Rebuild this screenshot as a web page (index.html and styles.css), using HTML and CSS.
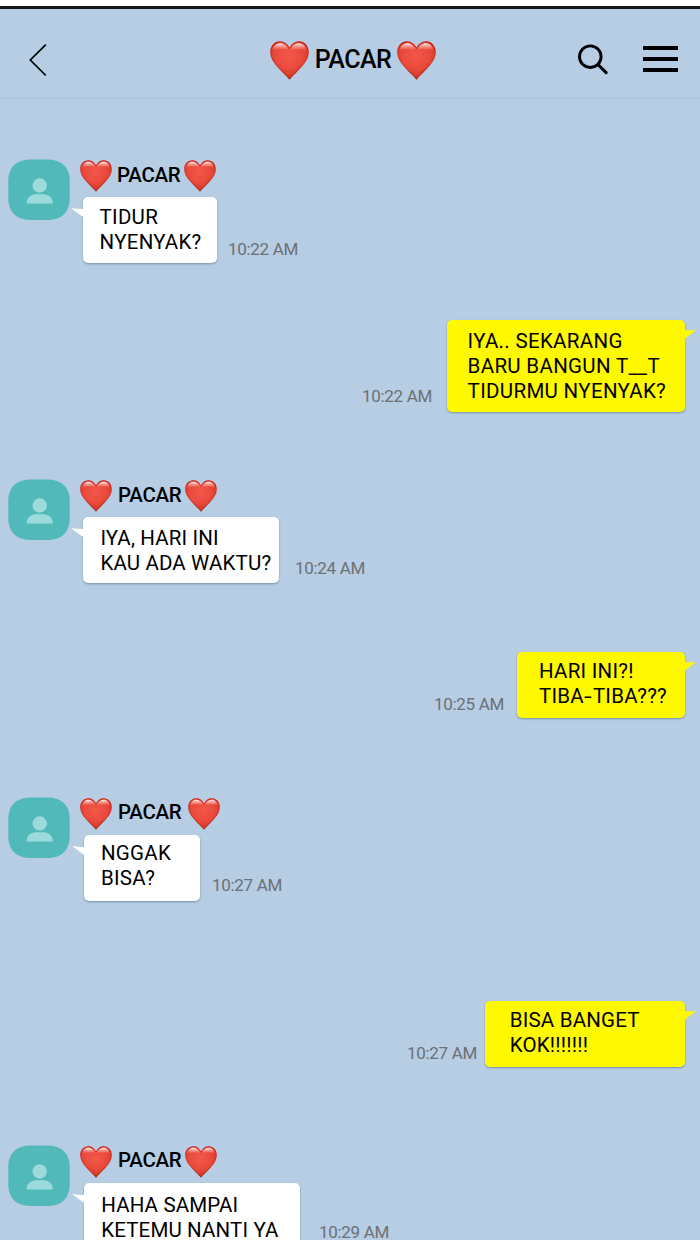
FILE: index.html
```html
<!DOCTYPE html>
<html lang="id">
<head>
<meta charset="utf-8">
<title>Pacar</title>
<link rel="stylesheet" href="styles.css">
</head>
<body>
<svg class="defs" width="0" height="0" aria-hidden="true">
  <defs>
    <linearGradient id="heart-edge" x1="0" y1="0" x2="0" y2="1">
      <stop offset="0" stop-color="#c9120b"/><stop offset=".55" stop-color="#d23a2b"/><stop offset="1" stop-color="#a52a14"/>
    </linearGradient>
    <radialGradient id="heart-fill" cx=".48" cy=".38" r=".62">
      <stop offset="0" stop-color="#f2584b"/><stop offset=".6" stop-color="#ea4a3c"/><stop offset="1" stop-color="#d23424"/>
    </radialGradient>
    <linearGradient id="heart-shine" x1="0" y1="0" x2="0" y2="1">
      <stop offset="0" stop-color="#fff" stop-opacity=".95"/><stop offset="1" stop-color="#ff8a7c" stop-opacity="0"/>
    </linearGradient>
    <symbol id="heart" viewBox="0 0 32 32">
      <path fill="url(#heart-edge)" d="M16 5.400C14.200 2.200 11.500.300 8.300.300 3.700.300.200 4.100.200 9.200c0 8.300 8.600 14.400 15.800 22.500 7.200-8.100 15.800-14.200 15.800-22.500 0-5.100-3.500-8.900-8.100-8.900-3.200 0-5.900 1.900-7.700 5.100z"/>
      <path fill="url(#heart-fill)" d="M16 6.700C14.300 3.200 11.600 1.100 8.500 1.100 4.200 1.100 1 4.600 1 9.300c0 7.600 8.100 13.400 15 21.200 6.900-7.800 15-13.600 15-21.200 0-4.700-3.200-8.200-7.500-8.200-3.100 0-5.800 2.100-7.500 5.600z"/>
      <path fill="url(#heart-shine)" d="M2 8.400C2.500 4 5.200 1.800 8.300 1.800c3 0 5.500 1.900 6.700 5.400C12.800 6.600 10.700 6.500 8.200 6.500 5.800 6.500 3.700 7 2 8.400zM17 7.200c1.200-3.500 3.700-5.400 6.700-5.400 3.100 0 5.800 2.200 6.300 6.600-1.700-1.400-3.800-1.900-6.200-1.900-2.500 0-4.600.100-6.800.700z"/>
    </symbol>
    <symbol id="avatar" viewBox="0 0 62 61">
      <path fill="#51b9b9" d="M23 .500h16c15 0 22.700 8 22.700 21v18c0 13-7.700 21.500-22.700 21.500H23C8 61 .300 52.500.300 39.500v-18C.300 8.500 8 .500 23 .500z"/>
      <circle cx="31.700" cy="26.500" r="7.200" fill="#9ddadb"/>
      <path fill="#9ddadb" d="M18.600 44.500c0-5.700 4-9.200 9-9.200h8.200c5 0 9 3.500 9 9.200z"/>
    </symbol>
    <symbol id="tail-left" viewBox="0 0 14 11">
      <path d="M0 0Q6 1.200 14 1V10L10 7.500z" fill="#fff"/>
    </symbol>
    <symbol id="tail-right" viewBox="0 0 12 10">
      <path d="M0 1Q6 1.400 12 .900L1 9.500H0z" fill="#fff900"/>
    </symbol>
  </defs>
</svg>
<div class="screen">
  <header class="header">
    <svg class="back" viewBox="0 0 20 34"><path d="M17.800 1.600 2.300 17l15.500 15.500" fill="none" stroke="#000" stroke-width="1.700"/></svg>
    <h1 class="title"><svg class="title-heart"><use href="#heart"/></svg><span class="title-text">PACAR</span><svg class="title-heart"><use href="#heart"/></svg></h1>
    <div class="actions">
      <svg class="search" viewBox="0 0 32 32"><circle cx="12.300" cy="12.700" r="10.800" fill="none" stroke="#000" stroke-width="2.900"/><path d="M19.900 20.500l8.200 8.200" stroke="#000" stroke-width="3.100" stroke-linecap="round"/></svg>
      <div class="menu"><i></i><i></i><i></i></div>
    </div>
  </header>
  <main class="chat">
    <article class="msg in first">
      <svg class="avatar"><use href="#avatar"/></svg>
      <div class="body">
        <div class="name"><svg class="heart"><use href="#heart"/></svg><span class="who">PACAR</span><svg class="heart"><use href="#heart"/></svg></div>
        <div class="line"><p class="bubble"><svg class="tail"><use href="#tail-left"/></svg>TIDUR<br>NYENYAK?</p><time class="time">10:22 AM</time></div>
      </div>
    </article>
    <article class="msg out awake">
      <time class="time">10:22 AM</time>
      <p class="bubble"><svg class="tail"><use href="#tail-right"/></svg>IYA.. SEKARANG<br>BARU BANGUN T<span class="score">__</span>T<br>TIDURMU NYENYAK?</p>
    </article>
    <article class="msg in free">
      <svg class="avatar"><use href="#avatar"/></svg>
      <div class="body">
        <div class="name"><svg class="heart"><use href="#heart"/></svg><span class="who">PACAR</span><svg class="heart"><use href="#heart"/></svg></div>
        <div class="line"><p class="bubble"><svg class="tail"><use href="#tail-left"/></svg>IYA, HARI INI<br>KAU ADA WAKTU?</p><time class="time">10:24 AM</time></div>
      </div>
    </article>
    <article class="msg out today">
      <time class="time">10:25 AM</time>
      <p class="bubble"><svg class="tail"><use href="#tail-right"/></svg>HARI INI?!<br>TIBA<span class="dash">-</span>TIBA???</p>
    </article>
    <article class="msg in cannot">
      <svg class="avatar"><use href="#avatar"/></svg>
      <div class="body">
        <div class="name"><svg class="heart"><use href="#heart"/></svg><span class="who">PACAR</span><svg class="heart"><use href="#heart"/></svg></div>
        <div class="line"><p class="bubble"><svg class="tail"><use href="#tail-left"/></svg>NGGAK<br>BISA?</p><time class="time">10:27 AM</time></div>
      </div>
    </article>
    <article class="msg out sure">
      <time class="time">10:27 AM</time>
      <p class="bubble"><svg class="tail"><use href="#tail-right"/></svg>BISA BANGET<br>KOK!!!!!!!</p>
    </article>
    <article class="msg in later">
      <svg class="avatar"><use href="#avatar"/></svg>
      <div class="body">
        <div class="name"><svg class="heart"><use href="#heart"/></svg><span class="who">PACAR</span><svg class="heart"><use href="#heart"/></svg></div>
        <div class="line"><p class="bubble"><svg class="tail"><use href="#tail-left"/></svg>HAHA SAMPAI<br>KETEMU NANTI YA</p><time class="time">10:29 AM</time></div>
      </div>
    </article>
  </main>
</div>
</body>
</html>
```

FILE: styles.css
```css
* { box-sizing: border-box; }
body { margin: 0; background: #b6cde3; font-family: Roboto, "Liberation Sans", sans-serif; color: #000; }
svg { display: block; flex: none; }
.defs { position: absolute; }
.screen { width: 700px; height: 1240px; overflow: hidden; border-top: 6px solid #fff; background: #b6cde3; }

.header {
  height: 93px;
  border-top: 3px solid #11161a;
  border-bottom: 2px solid #b1c7df;
  display: grid;
  grid-template-columns: 270px 1fr 264px;
  align-items: start;
}
.back { width: 20px; height: 34px; margin: 34px 0 0 28px; }
.title { margin: 32px 0 0; display: flex; align-items: center; justify-content: space-between; height: 39px; font-size: 25px; font-weight: 500; line-height: 36px; letter-spacing: -.5px; }
.title-heart { width: 39px; height: 39px; }
.title-text { height: 37px; }
.actions { display: flex; justify-content: flex-end; padding: 35px 22px 0 0; gap: 33px; }
.search { width: 32px; height: 32px; }
.menu { width: 35px; height: 26px; margin-top: 2px; display: flex; flex-direction: column; justify-content: space-between; }
.menu i { height: 4px; background: #000; }

.msg { display: flex; }
.in { padding-left: 8px; height: 105px; }
.avatar { width: 62px; height: 61px; }
.body { padding-left: 10px; }
.name { display: flex; align-items: center; height: 33px; font-size: 20.500px; font-weight: 500; line-height: 30px; letter-spacing: -.3px; }
.heart { width: 32px; height: 32px; }
.who { width: 64px; height: 32px; margin: 0 3px 0 5px; white-space: nowrap; }
.line { display: flex; align-items: flex-end; padding: 5px 0 0 3px; }
.bubble { position: relative; margin: 0; height: 66px; padding: 8px 0 0 16.600px; font-size: 20.500px; line-height: 25px; letter-spacing: .25px; white-space: nowrap; border-radius: 5px; background: #fff; box-shadow: 0 1px 2px rgba(60, 85, 115, .5); }
.time { font-size: 17px; line-height: 20px; letter-spacing: -.3px; color: #6c7075; white-space: nowrap; margin-bottom: 4px; width: 70px; }
.in .tail { position: absolute; left: -12px; top: 11px; width: 14px; height: 11px; }
.out { justify-content: flex-end; align-items: flex-end; padding-right: 15px; }
.out .bubble { background: #fff900; padding-left: 22px; }
.out .tail { position: absolute; right: -11px; top: 9px; width: 12px; height: 10px; }
.dash { display: inline-block; transform: scaleX(1.35); margin: 0 1.500px; }
.score { letter-spacing: -.1px; margin-right: .6px; }

.first { margin-top: 60px; }
.first .bubble { width: 134px; }
.first .time { margin-left: 11px; }

.awake { margin-top: 56px; }
.awake .bubble { width: 238px; height: 92px; padding: 9px 0 0 20.600px; letter-spacing: .32px; }
.awake .time { margin: 0 15px 6px 0; }

.free { margin-top: 67px; }
.free .bubble { width: 196px; padding: 9px 0 0 17.400px; letter-spacing: .150px; }
.free .time { margin: 0 0 5px 16px; }
.free .who, .later .who { margin: 0 3px 0 6px; }

.today { margin-top: 68px; }
.today .bubble { width: 168px; padding-top: 7px; }
.today .time { margin: 0 13px 4px 0; }

.cannot { margin-top: 79px; }
.cannot .line, .later .line { padding-left: 4px; }
.cannot .bubble { width: 116px; padding: 6px 0 0 17px; }
.cannot .time { margin: 0 0 6px 12px; }
.cannot .name, .later .name { line-height: 28px; }
.cannot .who { margin: 0 6px; }

.sure { margin-top: 99px; }
.sure .bubble { width: 200px; padding: 7px 0 0 24.700px; letter-spacing: .2px; }
.sure .time { margin: 0 8px 4px 0; }

.later { margin-top: 78px; }
.later .bubble { width: 216px; height: 92px; padding: 10px 0 0 17.200px; letter-spacing: .150px; }
.later .time { margin: 0 0 33px 19px; }
```
